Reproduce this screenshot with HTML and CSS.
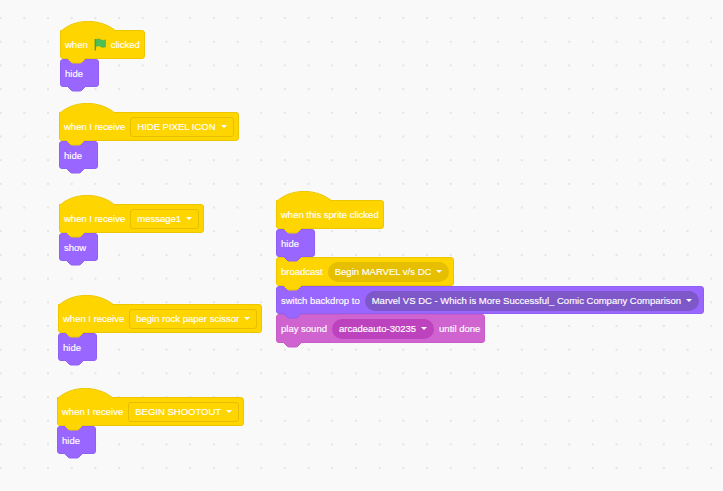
FILE: index.html
```html
<!DOCTYPE html>
<html>

<head>
    <title>Scratch Workspace</title>
    <link rel="stylesheet" href="styles.css">
</head>

<body>
    <div class="workspace">

        <div class="stack stack-flag">
            <div class="block event hat">
                <svg class="hat-top" width="58" height="11"><path d="M0.5 10.5C15 -3 41 -3 56.5 10.5"/></svg>
                <span>when</span>
                <svg class="flag" width="12" height="13" viewBox="0 0 14 15">
                    <path class="flag-pole" d="M1.5 1V14.500"/>
                    <path class="flag-cloth" d="M2 2C4.500 0.500 6.500 1 8 2C9.500 3 11.500 3 13.500 2V10C11.500 11 9.500 11 8 10C6.500 9 4.500 8.500 2 10Z"/>
                </svg>
                <span>clicked</span>
                <svg class="bump" width="19" height="6"><path d="M0 0L4 4Q5 5 6 5H13Q14 5 15 4L19 0"/></svg>
            </div>
            <div class="block looks">
                <span>hide</span>
                <svg class="bump" width="19" height="6"><path d="M0 0L4 4Q5 5 6 5H13Q14 5 15 4L19 0"/></svg>
            </div>
        </div>

        <div class="stack stack-pixel">
            <div class="block event hat">
                <svg class="hat-top" width="58" height="11"><path d="M0.5 10.5C15 -3 41 -3 56.5 10.5"/></svg>
                <span>when I receive</span>
                <div class="field square">HIDE PIXEL ICON<i class="caret"></i></div>
                <svg class="bump" width="19" height="6"><path d="M0 0L4 4Q5 5 6 5H13Q14 5 15 4L19 0"/></svg>
            </div>
            <div class="block looks">
                <span>hide</span>
                <svg class="bump" width="19" height="6"><path d="M0 0L4 4Q5 5 6 5H13Q14 5 15 4L19 0"/></svg>
            </div>
        </div>

        <div class="stack stack-message">
            <div class="block event hat">
                <svg class="hat-top" width="58" height="11"><path d="M0.5 10.5C15 -3 41 -3 56.5 10.5"/></svg>
                <span>when I receive</span>
                <div class="field square">message1<i class="caret"></i></div>
                <svg class="bump" width="19" height="6"><path d="M0 0L4 4Q5 5 6 5H13Q14 5 15 4L19 0"/></svg>
            </div>
            <div class="block looks">
                <span>show</span>
                <svg class="bump" width="19" height="6"><path d="M0 0L4 4Q5 5 6 5H13Q14 5 15 4L19 0"/></svg>
            </div>
        </div>

        <div class="stack stack-rps">
            <div class="block event hat">
                <svg class="hat-top" width="58" height="11"><path d="M0.5 10.5C15 -3 41 -3 56.5 10.5"/></svg>
                <span>when I receive</span>
                <div class="field square">begin rock paper scissor<i class="caret"></i></div>
                <svg class="bump" width="19" height="6"><path d="M0 0L4 4Q5 5 6 5H13Q14 5 15 4L19 0"/></svg>
            </div>
            <div class="block looks">
                <span>hide</span>
                <svg class="bump" width="19" height="6"><path d="M0 0L4 4Q5 5 6 5H13Q14 5 15 4L19 0"/></svg>
            </div>
        </div>

        <div class="stack stack-shootout">
            <div class="block event hat">
                <svg class="hat-top" width="58" height="11"><path d="M0.5 10.5C15 -3 41 -3 56.5 10.5"/></svg>
                <span>when I receive</span>
                <div class="field square">BEGIN SHOOTOUT<i class="caret"></i></div>
                <svg class="bump" width="19" height="6"><path d="M0 0L4 4Q5 5 6 5H13Q14 5 15 4L19 0"/></svg>
            </div>
            <div class="block looks">
                <span>hide</span>
                <svg class="bump" width="19" height="6"><path d="M0 0L4 4Q5 5 6 5H13Q14 5 15 4L19 0"/></svg>
            </div>
        </div>

        <div class="stack stack-sprite">
            <div class="block event hat">
                <svg class="hat-top" width="58" height="11"><path d="M0.5 10.5C15 -3 41 -3 56.5 10.5"/></svg>
                <span>when this sprite clicked</span>
                <svg class="bump" width="19" height="6"><path d="M0 0L4 4Q5 5 6 5H13Q14 5 15 4L19 0"/></svg>
            </div>
            <div class="block looks">
                <span>hide</span>
                <svg class="bump" width="19" height="6"><path d="M0 0L4 4Q5 5 6 5H13Q14 5 15 4L19 0"/></svg>
            </div>
            <div class="block event">
                <span>broadcast</span>
                <div class="field round">Begin MARVEL v/s DC<i class="caret"></i></div>
                <svg class="bump" width="19" height="6"><path d="M0 0L4 4Q5 5 6 5H13Q14 5 15 4L19 0"/></svg>
            </div>
            <div class="block looks">
                <span>switch backdrop to</span>
                <div class="field round">Marvel VS DC - Which is More Successful_ Comic Company Comparison<i class="caret"></i></div>
                <svg class="bump" width="19" height="6"><path d="M0 0L4 4Q5 5 6 5H13Q14 5 15 4L19 0"/></svg>
            </div>
            <div class="block sound">
                <span>play sound</span>
                <div class="field round">arcadeauto-30235<i class="caret"></i></div>
                <span>until done</span>
                <svg class="bump" width="19" height="6"><path d="M0 0L4 4Q5 5 6 5H13Q14 5 15 4L19 0"/></svg>
            </div>
        </div>

    </div>
</body>

</html>
```

FILE: styles.css
```css
html,
body {
    margin: 0;
    height: 100%;
    font-family: "Liberation Sans", Arial, sans-serif;
    background: #f9f9f9;
}

/* free canvas, the stacks sit where the user dragged them */
.workspace {
    position: relative;
    width: 723px;
    height: 491px;
    overflow: hidden;
    background-image: radial-gradient(circle, #e4e4e4 0.7px, transparent 1px);
    background-size: 23.7px 23.7px;
    background-position: -11.2px 6.2px;
}

.stack {
    position: absolute;
    display: flex;
    flex-direction: column;
    align-items: flex-start;
}

.stack-flag { left: 60px; top: 30px; }
.stack-pixel { left: 59px; top: 112px; }
.stack-message { left: 59px; top: 204px; }
.stack-rps { left: 58px; top: 304px; }
.stack-shootout { left: 57px; top: 397px; }
.stack-sprite { left: 276px; top: 200px; }

.block {
    position: relative;
    box-sizing: border-box;
    display: flex;
    align-items: center;
    gap: 5px;
    height: 29px;
    min-width: 39px;
    padding: 0 4px;
    border: 1px solid;
    border-radius: 3px;
    color: white;
    font-size: 9.5px;
    white-space: nowrap;
    -webkit-text-stroke: 0.15px white;
}

.event {
    background: #ffd500;
    border-color: #ecc700;
    fill: #ffd500;
    stroke: #ecc700;
}

.looks {
    height: 28px;
    padding-top: 1px;
    background: #9966ff;
    border-color: #9060f2;
    fill: #9966ff;
    stroke: #9060f2;
}

.sound {
    background: #cf63cf;
    border-color: #c85cc8;
    fill: #cf63cf;
    stroke: #c85cc8;
}

.hat {
    border-top-left-radius: 0;
}

.hat-top {
    position: absolute;
    left: -1px;
    top: -10px;
}

.bump {
    position: absolute;
    left: 6px;
    bottom: -6px;
    z-index: 1;
}

.flag {
    margin-left: 1px;
}

.flag-pole {
    fill: none;
    stroke: #45993d;
    stroke-width: 1.5;
}

.flag-cloth {
    fill: #4cbf56;
    stroke: #45993d;
    stroke-width: 0.5;
}

.field {
    display: flex;
    align-items: center;
    gap: 5px;
    height: 20px;
    box-sizing: border-box;
    padding: 0 6px;
}

.square {
    border: 1px solid #e6bf00;
    border-radius: 3px;
}

.round {
    border-radius: 10px;
    padding: 0 7px;
}

.event .round { background: #e6bf00; }
.looks .round { background: #7e57c9; }
.sound .round { background: #bd42bd; }

.caret {
    width: 0;
    height: 0;
    border-left: 3px solid transparent;
    border-right: 3px solid transparent;
    border-top: 3.500px solid white;
}
```
